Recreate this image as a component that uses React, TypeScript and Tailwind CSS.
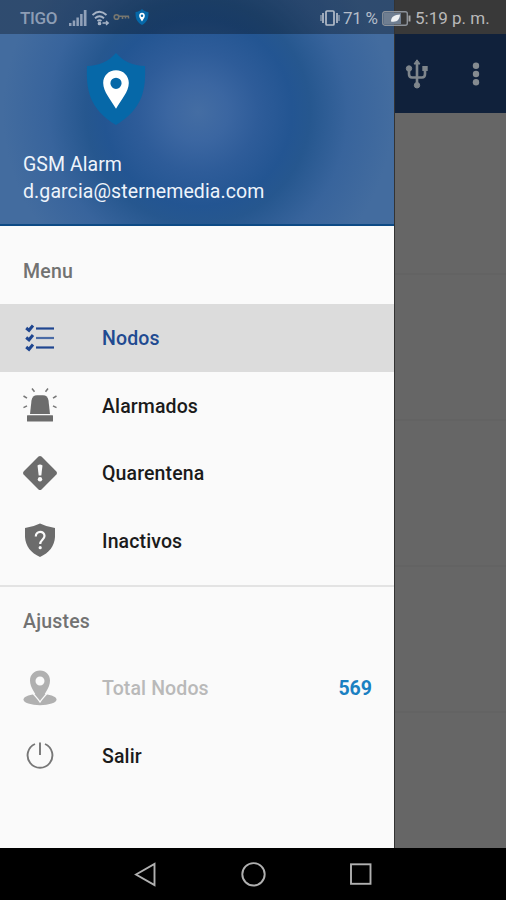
import type { ReactNode } from "react";

interface MenuRowProps {
  icon: ReactNode;
  label: string;
  active?: boolean;
  disabled?: boolean;
  value?: string;
}

function ShieldLogo({ className }: { className?: string }) {
  return (
    <svg viewBox="0 0 60 72" className={className}>
      <path
        d="M30 0C23 8 13 13 1 13C0 36 3 56 30 72C57 56 60 36 59 13C47 13 37 8 30 0Z"
        fill="#0668a8"
      />
      <path
        fillRule="evenodd"
        d="M30 17.300C22.700 17.300 17.200 22.800 17.200 30C17.200 38.800 25 46.800 30 55.800C35 46.800 42.800 38.800 42.800 30C42.800 22.800 37.300 17.300 30 17.300ZM30 24.700A5.600 5.600 0 1 1 30 35.900A5.600 5.600 0 1 1 30 24.700Z"
        fill="#fff"
      />
    </svg>
  );
}

function ChecklistIcon() {
  return (
    <svg viewBox="0 0 34 34" className="h-[34px] w-[34px]" fill="none" stroke="#1f4690">
      <path d="M13 7.500H31" strokeWidth="2.200" />
      <path d="M13 17H31" strokeWidth="2.200" stroke="#4a6ba6" />
      <path d="M13 26.500H31" strokeWidth="2.200" />
      <path d="M3.200 7L6 9.300L10 4.500M3.200 16.500L6 18.800L10 14M3.200 26L6 28.300L10 23.500" strokeWidth="3" />
    </svg>
  );
}

function SirenIcon() {
  return (
    <svg viewBox="0 0 34 34" className="h-[34px] w-[34px]">
      <path d="M7 26L8.500 12.500C9 9.200 11 7.300 14 7.300H20C23 7.300 25 9.200 25.500 12.500L27 26Z" fill="#6c6c6c" />
      <rect x="4" y="27.300" width="26" height="6.200" rx="0.500" fill="#6c6c6c" />
      <path
        d="M9 0.500L11.500 3.800M25 0.500L22.500 3.800M0.500 8L4 10.200M33.500 8L30 10.200M0.500 19.700L4 17.800M33.500 19.700L30 17.800"
        stroke="#777"
        strokeWidth="1.500"
      />
    </svg>
  );
}

function WarningIcon() {
  return (
    <svg viewBox="0 0 34 34" className="h-[34px] w-[34px]">
      <path d="M15.500 0.600Q17 -0.500 18.500 0.600L33.400 15.500Q34.500 17 33.400 18.500L18.500 33.400Q17 34.500 15.500 33.400L0.600 18.500Q-0.500 17 0.600 15.500Z" fill="#6c6c6c" />
      <path d="M14.500 9.500Q17 7.500 19.500 9.500L18.300 19.500H15.700Z" fill="#fafafa" />
      <circle cx="17" cy="23.300" r="2.200" fill="#fafafa" />
    </svg>
  );
}

function UnknownShieldIcon() {
  return (
    <svg viewBox="0 0 34 34" className="h-[34px] w-[34px]">
      <path d="M17 0.500Q24 4 32 5V14C31.500 23 26 30 17 34C8 30 2.500 23 2 14V5Q10 4 17 0.500Z" fill="#6c6c6c" />
      <path d="M12.800 13.500C12.800 7.500 21.500 7.500 21.500 13C21.500 16.500 17.200 17 17.200 21" fill="none" stroke="#fafafa" strokeWidth="2.200" />
      <circle cx="17.200" cy="24.700" r="1.600" fill="#fafafa" />
    </svg>
  );
}

function LocationIcon() {
  return (
    <svg viewBox="0 0 34 36" className="h-[36px] w-[34px]">
      <ellipse cx="17" cy="29.500" rx="16.500" ry="5.700" fill="#b0b0b0" />
      <path
        fillRule="evenodd"
        d="M17 0.500C11 0.500 7 5 7 10.500C7 18 13 24 17 32C21 24 27 18 27 10.500C27 5 23 0.500 17 0.500ZM17 6.500A4.500 4.500 0 1 1 17 15.500A4.500 4.500 0 1 1 17 6.500Z"
        fill="#b0b0b0"
      />
      <path d="M7 18C9 24 14 27 17 32C20 27 25 24 27 18" fill="none" stroke="#fafafa" strokeWidth="1.400" />
    </svg>
  );
}

function PowerIcon() {
  return (
    <svg viewBox="0 0 34 34" className="h-[34px] w-[34px]" fill="none" stroke="#777" strokeWidth="1.900">
      <path d="M12 6A12.400 12.400 0 1 0 22 6M17 4.500V17" />
    </svg>
  );
}

function MenuRow({ icon, label, active, disabled, value }: MenuRowProps) {
  const color = active ? "text-[#214a91]" : disabled ? "text-[#b9b9b9]" : "text-[#1b1b1b]";
  return (
    <div className={`flex h-[67.5px] items-center pl-[23px] pr-[22px] ${active ? "bg-[#dcdcdc]" : ""}`}>
      <span className="flex w-[79px] shrink-0 items-center">{icon}</span>
      <span className={`flex-1 pt-[2px] text-[19.5px] font-medium tracking-[0.12px] ${color}`}>{label}</span>
      {value && <span className="pt-[2px] text-[19.5px] font-bold text-[#1a80c2]">{value}</span>}
    </div>
  );
}

function StatusBar() {
  return (
    <div className="absolute inset-x-0 top-0 flex h-[34px] items-center pt-[2px] pl-[20px] pr-[16px] text-[17px] text-[#b4bdc9]">
      <span className="w-[49px] pt-[1px] text-[17px] tracking-[-0.3px] font-medium text-[#8d9db5]">TIGO</span>
      <svg viewBox="0 0 18 16" className="h-[16px] w-[18px]" fill="#91a1b9">
        <path d="M0 13h2.500v3H0zM3.700 10.500h2.500V16H3.700zM7.400 7.500h2.500V16H7.400zM11.100 4h2.500v12h-2.500zM14.800 0h2.700v16h-2.700z" />
      </svg>
      <svg viewBox="0 0 18 16" className="ml-[5px] h-[16px] w-[18px]" fill="none" stroke="#a7b4c6" strokeWidth="1.900">
        <path d="M0.500 5Q7.500 -1.500 14.500 5M3 8.300Q7.500 4.300 12 8.300M5.500 11Q7.500 9.500 9.500 11" />
        <circle cx="7.500" cy="13.500" r="0.900" fill="#a7b4c6" />
        <path d="M10.500 13h6M14 11l2.300 2L14 15" strokeWidth="1.300" />
      </svg>
      <svg viewBox="0 0 17 8" className="mb-[3px] ml-[3px] h-[8px] w-[17px]" fill="none" stroke="#77766f" strokeWidth="1.600">
        <circle cx="3.500" cy="4" r="2.300" />
        <path d="M6 3.300H16M9.500 3.500V6M12.500 3.500V5.500M15.500 3.500V5.500" />
      </svg>
      <ShieldLogo className="mb-[2px] ml-[5px] h-[16px] w-[14px]" />

      <svg viewBox="0 0 20 16" className="ml-auto h-[16px] w-[20px]" fill="none" stroke="#b4bdc9" strokeWidth="1.700">
        <rect x="6" y="1" width="8" height="14" rx="1" />
        <path d="M3 3v10M17 3v10" />
        <path d="M1 5v6M19 5v6" strokeWidth="1" />
      </svg>
      <span className="ml-[3px] w-[39px] whitespace-nowrap pt-[1px] tracking-[-0.3px]">71 %</span>
      <svg viewBox="0 0 29 15" className="h-[15px] w-[29px]">
        <rect x="0.800" y="0.800" width="24.500" height="13.400" rx="2" fill="none" stroke="#8d939b" strokeWidth="1.400" />
        <rect x="2" y="2" width="17" height="11" fill="#6f7e91" />
        <path d="M26.500 4.500h2v6h-2z" fill="#a5a5a5" />
        <path d="M9 10.500C9 5 13 4 18 3.500C17.500 9 15 11.500 9 10.500Z" fill="#eef0f2" />
      </svg>
      <span className="ml-[4px] w-[75px] whitespace-nowrap pt-[1px] text-[#b9b9b9]">5:19 p. m.</span>
    </div>
  );
}

function Drawer() {
  return (
    <aside className="w-[394px] shrink-0 bg-[#fafafa]">
      <header className="flex h-[226px] flex-col border-b-2 border-[#0d4a85] bg-[linear-gradient(#0000004d_34px,transparent_34px),radial-gradient(circle_at_198px_112px,#446da3_0px,#3b66a1_30px,#2e5c99_60px,#235592_94px,#26578f_112px,#38649c_150px,#436c9f_195px)] pl-[23px] pt-[53px] text-[19.5px] leading-[26.5px] text-[#eef4fb]">
        <ShieldLogo className="ml-[63px] h-[72px] w-[60px]" />
        <p className="mt-[27px] tracking-[0.05px]">GSM Alarm</p>
        <p className="tracking-[0.1px]">d.garcia@sternemedia.com</p>
      </header>

      <h2 className="flex h-[78px] items-center pl-[23px] pt-[14px] text-[19.5px] font-medium tracking-[0.2px] text-[#727272]">Menu</h2>
      <MenuRow icon={<ChecklistIcon />} label="Nodos" active />
      <MenuRow icon={<SirenIcon />} label="Alarmados" />
      <MenuRow icon={<WarningIcon />} label="Quarentena" />
      <MenuRow icon={<UnknownShieldIcon />} label="Inactivos" />

      <h2 className="mt-[11px] flex h-[69px] items-center border-t-2 border-[#e3e3e3] pt-[2px] text-[19.5px] font-medium tracking-[0.2px] text-[#727272]">
        <span className="pl-[23px]">Ajustes</span>
      </h2>
      <MenuRow icon={<LocationIcon />} label="Total Nodos" value="569" disabled />
      <MenuRow icon={<PowerIcon />} label="Salir" />
    </aside>
  );
}

function DimmedPage() {
  return (
    <main className="flex flex-1 flex-col border-l border-[#333] bg-[#666]">
      <div className="h-[34px] bg-[#393939]" />
      <div className="flex h-[79px] items-center bg-[#10213b] pl-[10px]">
        <svg viewBox="0 0 24 30" className="h-[30px] w-[24px]" fill="#7f868c" stroke="#7f868c">
          <path d="M12 4V26M4 10V15Q4 18.500 7 18.500H17Q20 18.500 20 15V10" fill="none" strokeWidth="2.600" />
          <path d="M12 0.800L15 5H9Z" />
          <circle cx="12" cy="26.300" r="2.700" />
          <circle cx="4" cy="9.500" r="2.700" />
          <path d="M17.300 7h5.400v5h-5.400z" stroke="none" />
        </svg>
        <svg viewBox="0 0 8 24" className="ml-[43px] h-[24px] w-[8px]" fill="#858b90">
          <circle cx="4" cy="3.700" r="3.200" />
          <circle cx="4" cy="12" r="3.200" />
          <circle cx="4" cy="20.300" r="3.200" />
        </svg>
      </div>
      <div className="h-[162px] border-b-2 border-[#636363]" />
      <div className="h-[146px] border-b-2 border-[#636363]" />
      <div className="h-[146px] border-b-2 border-[#636363]" />
      <div className="h-[146px] border-b-2 border-[#636363]" />
    </main>
  );
}

function NavigationBar() {
  return (
    <nav className="flex h-[52px] items-center bg-black pl-[134px]">
      <svg viewBox="0 0 24 26" className="h-[26px] w-[24px]" fill="none" stroke="#b0b0b0" strokeWidth="1.900">
        <path d="M2 13.500L20.500 3V24Z" />
      </svg>
      <svg viewBox="0 0 26 26" className="ml-[83px] h-[26px] w-[26px]" fill="none" stroke="#b0b0b0" strokeWidth="1.900">
        <circle cx="12.500" cy="13.300" r="11.200" />
      </svg>
      <svg viewBox="0 0 24 24" className="ml-[82px] h-[24px] w-[24px]" fill="none" stroke="#b0b0b0" strokeWidth="1.900">
        <rect x="2" y="2.300" width="19.500" height="19.500" />
      </svg>
    </nav>
  );
}

export default function App() {
  return (
    <div className="relative flex h-[900px] w-[506px] flex-col overflow-hidden font-['Roboto',sans-serif]">
      <div className="flex h-[848px]">
        <Drawer />
        <DimmedPage />
      </div>
      <NavigationBar />
      <StatusBar />
    </div>
  );
}
